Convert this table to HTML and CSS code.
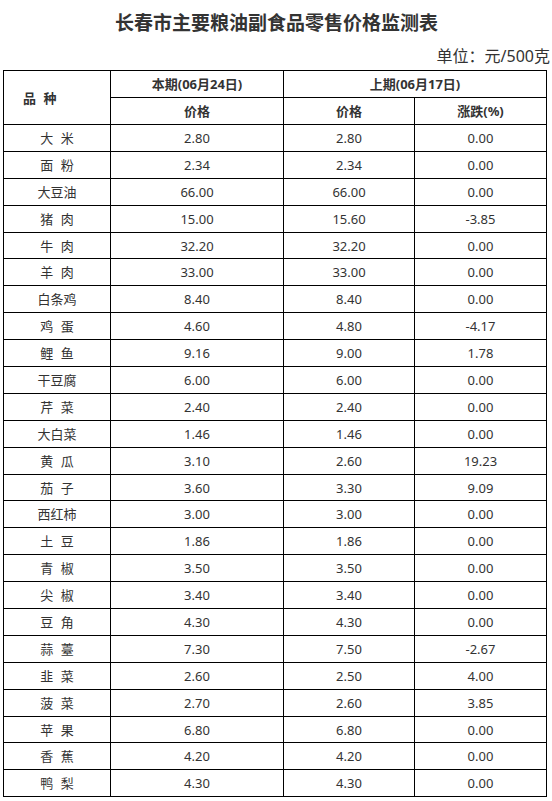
FILE: index.html
```html
<!DOCTYPE html>
<html lang="zh">
<head>
<meta charset="utf-8">
<title>长春市主要粮油副食品零售价格监测表</title>
<link rel="stylesheet" href="styles.css">
</head>
<body>
<div class="page">
  <h1 class="title">长春市主要粮油副食品零售价格监测表</h1>
  <div class="unit">单位：元/500克</div>
  <table class="price">
    <colgroup>
      <col class="c1"><col class="c2"><col class="c3"><col class="c4">
    </colgroup>
    <thead>
      <tr>
        <th rowspan="2" class="kind nm">品 种</th>
        <th>本期(06月24日)</th>
        <th colspan="2">上期(06月17日)</th>
      </tr>
      <tr>
        <th>价格</th>
        <th>价格</th>
        <th>涨跌(%)</th>
      </tr>
    </thead>
    <tbody>
      <tr><td class="nm">大 米</td><td>2.80</td><td>2.80</td><td>0.00</td></tr>
      <tr><td class="nm">面 粉</td><td>2.34</td><td>2.34</td><td>0.00</td></tr>
      <tr><td class="nm">大豆油</td><td>66.00</td><td>66.00</td><td>0.00</td></tr>
      <tr><td class="nm">猪 肉</td><td>15.00</td><td>15.60</td><td>-3.85</td></tr>
      <tr><td class="nm">牛 肉</td><td>32.20</td><td>32.20</td><td>0.00</td></tr>
      <tr><td class="nm">羊 肉</td><td>33.00</td><td>33.00</td><td>0.00</td></tr>
      <tr><td class="nm">白条鸡</td><td>8.40</td><td>8.40</td><td>0.00</td></tr>
      <tr><td class="nm">鸡 蛋</td><td>4.60</td><td>4.80</td><td>-4.17</td></tr>
      <tr><td class="nm">鲤 鱼</td><td>9.16</td><td>9.00</td><td>1.78</td></tr>
      <tr><td class="nm">干豆腐</td><td>6.00</td><td>6.00</td><td>0.00</td></tr>
      <tr><td class="nm">芹 菜</td><td>2.40</td><td>2.40</td><td>0.00</td></tr>
      <tr><td class="nm">大白菜</td><td>1.46</td><td>1.46</td><td>0.00</td></tr>
      <tr><td class="nm">黄 瓜</td><td>3.10</td><td>2.60</td><td>19.23</td></tr>
      <tr><td class="nm">茄 子</td><td>3.60</td><td>3.30</td><td>9.09</td></tr>
      <tr><td class="nm">西红柿</td><td>3.00</td><td>3.00</td><td>0.00</td></tr>
      <tr><td class="nm">土 豆</td><td>1.86</td><td>1.86</td><td>0.00</td></tr>
      <tr><td class="nm">青 椒</td><td>3.50</td><td>3.50</td><td>0.00</td></tr>
      <tr><td class="nm">尖 椒</td><td>3.40</td><td>3.40</td><td>0.00</td></tr>
      <tr><td class="nm">豆 角</td><td>4.30</td><td>4.30</td><td>0.00</td></tr>
      <tr><td class="nm">蒜 薹</td><td>7.30</td><td>7.50</td><td>-2.67</td></tr>
      <tr><td class="nm">韭 菜</td><td>2.60</td><td>2.50</td><td>4.00</td></tr>
      <tr><td class="nm">菠 菜</td><td>2.70</td><td>2.60</td><td>3.85</td></tr>
      <tr><td class="nm">苹 果</td><td>6.80</td><td>6.80</td><td>0.00</td></tr>
      <tr><td class="nm">香 蕉</td><td>4.20</td><td>4.20</td><td>0.00</td></tr>
      <tr><td class="nm">鸭 梨</td><td>4.30</td><td>4.30</td><td>0.00</td></tr>
    </tbody>
  </table>
</div>
</body>
</html>
```
FILE: styles.css
```css
html, body {
  margin: 0;
  padding: 0;
  background: #ffffff;
}

body {
  font-family: "Noto Sans", "Noto Sans CJK SC", sans-serif;
  color: #333333;
}

.page {
  padding: 0 2px 0 3px;
}

.title {
  margin: 0;
  height: 44px;
  line-height: 44px;
  font-size: 19px;
  font-weight: bold;
  text-align: center;
  color: #333333;
  font-family: "Noto Sans CJK SC", sans-serif;
}

.unit {
  height: 26px;
  line-height: 24px;
  font-size: 16px;
  text-align: right;
  color: #333333;
}

.price {
  border-collapse: collapse;
  width: 543px;
  table-layout: fixed;
  font-size: 13px;
}

.c1 { width: 107px; }
.c2 { width: 173px; }
.c3 { width: 131px; }
.c4 { width: 132px; }

.price th,
.price td {
  border: 1px solid #000000;
  padding: 0;
  height: 26px;
  text-align: center;
  vertical-align: middle;
  line-height: 16px;
}

.price td {
  height: 25.9px;
  font-weight: normal;
}

.price th {
  font-weight: bold;
  color: #333333;
}

.price .kind {
  text-align: left;
  padding-left: 19px;
}

.nm {
  word-spacing: 4px;
}
```
